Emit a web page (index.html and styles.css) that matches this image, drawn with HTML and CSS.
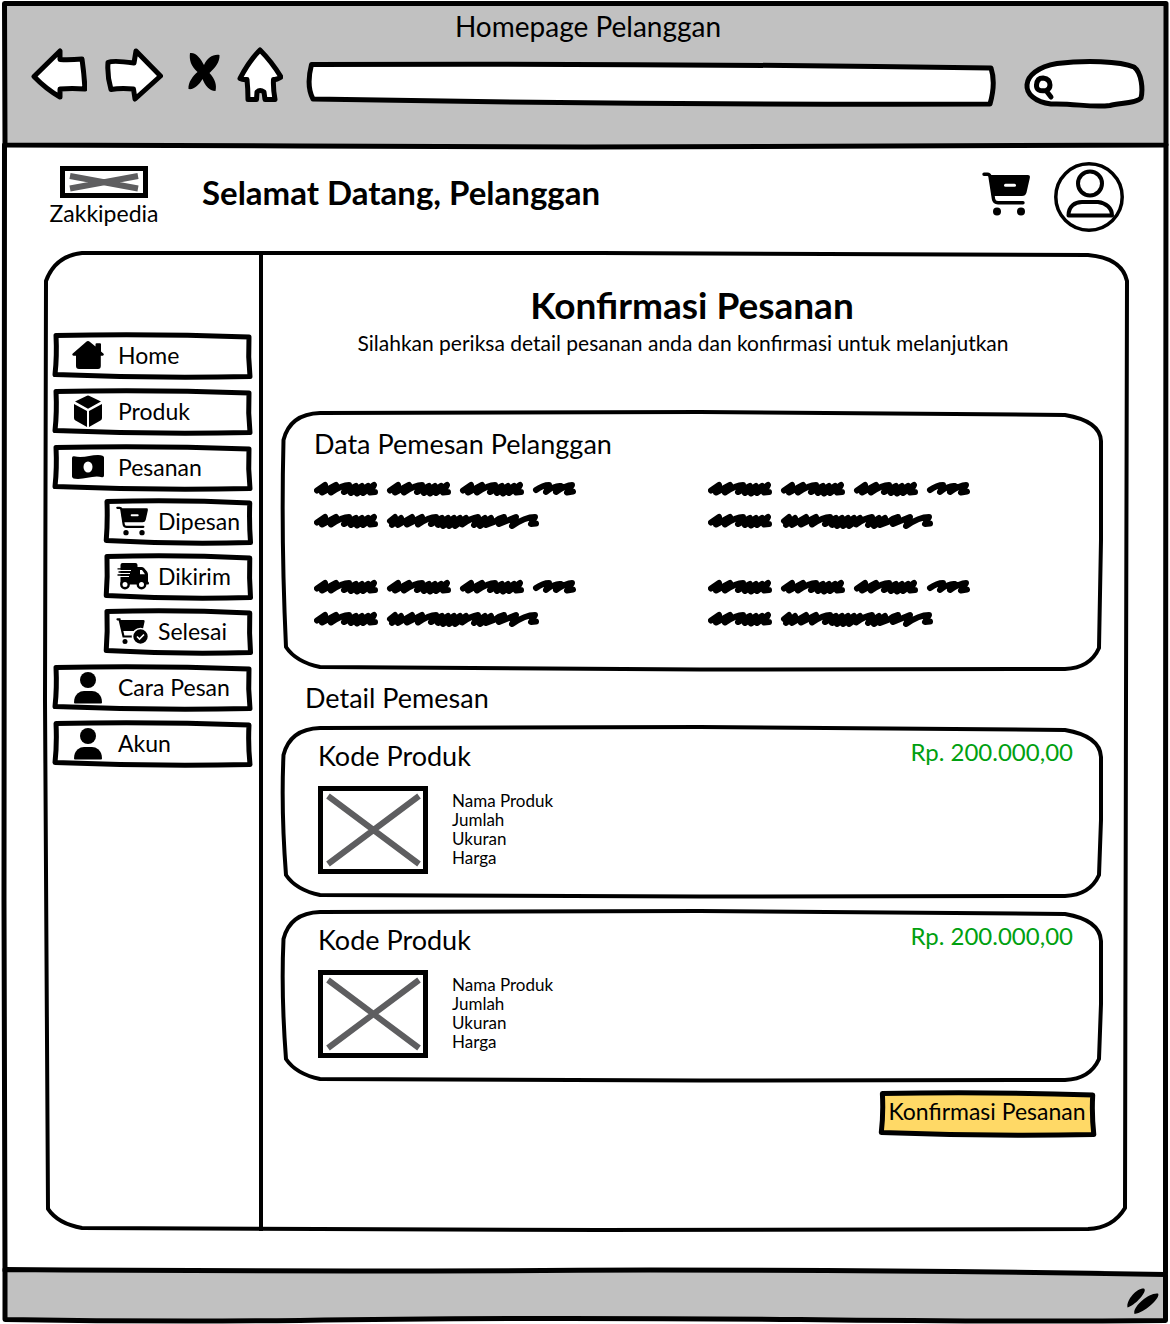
FILE: index.html
```html
<!DOCTYPE html>
<html lang="id">
<head>
<meta charset="utf-8">
<meta name="viewport" content="width=device-width, initial-scale=1">
<title>Homepage Pelanggan</title>
<link rel="stylesheet" href="styles.css">
</head>
<body>
<svg class="defs" aria-hidden="true">
  <symbol id="frame-item" viewBox="0 0 199 48" preserveAspectRatio="none">
    <path d="M4 3.500Q100 1.500 196 5Q195 25 197 44.500Q100 46.500 3 42.500Q5 24 4 3.500Z" vector-effect="non-scaling-stroke"/>
  </symbol>
  <symbol id="frame-card" viewBox="281 725 822 173" preserveAspectRatio="none">
    <path d="M320 728L700 727L1065 730Q1100 736 1101 757V820L1099 875Q1090 895 1065 896L700 896.5L320 895Q296 890 286 875Q281 810 283.5 755Q290 729 320 728Z" vector-effect="non-scaling-stroke"/>
  </symbol>
  <symbol id="icon-cart" viewBox="982 170 48 48">
    <path d="M984 174.2H987.5Q989.5 174.2 990 176.500L993.500 199Q994 202.700 998 202.700H1023" fill="none" stroke="#000" stroke-width="3.4" stroke-linecap="round"/>
    <path d="M989 175H1028Q1030.500 175 1029.800 178L1026.500 192.500Q1025.500 196 1022 196H992Z"/>
    <path d="M1005.500 185.300H1014.500" stroke="#fff" stroke-width="3" stroke-linecap="round"/>
    <circle cx="997" cy="211.500" r="4"/><circle cx="1021" cy="211.500" r="4"/>
  </symbol>
  <symbol id="icon-person" viewBox="72 671 32 32">
    <circle cx="88" cy="680" r="8"/>
    <path d="M74 702.500C74 694 80 691 84 691H92C96 691 102 694 102 702.500Q102 703.500 101 703.500H75Q74 703.500 74 702.500Z"/>
  </symbol>
  <symbol id="word" viewBox="0 0 64 16">
    <path d="M3 9.500L11 4L8 11.500L22 4L17 11.500Q28 4 35 4L30 11Q36 8 42 5L37 12L48 5L43 12.500L54 5L49 12L60 4L56 11.500L61 11"/>
  </symbol>
  <symbol id="word-short" viewBox="0 0 43 16">
    <path d="M3 9Q10 4 16 4L13 11Q22 4 28 5L23 11Q33 4 39 4L34 11.500L40 10.500"/>
  </symbol>
  <symbol id="word-long" viewBox="0 0 152 16">
    <path d="M3 8L8 4L5 12L14 5L11 12L25 4L20 11.500L35 4L31 11.500Q42 4 49 4L44 11L55 5L51 12L61 5L56 13L67 5L62 13L73 5L68 13L79 5L75 11.500Q84 5 91 4L87 12L98 5L93 13L104 5L99 12L107 9Q112 5 117 4L112 11L129 4L125 13Q138 4 148 4L144 11L149 10.500"/>
  </symbol>
  <symbol id="note" viewBox="0 0 262 48">
    <use href="#word" width="64" height="16"/>
    <use href="#word" x="73" width="64" height="16"/>
    <use href="#word" x="146" width="64" height="16"/>
    <use href="#word-short" x="219" width="43" height="16"/>
    <use href="#word" y="32" width="64" height="16"/>
    <use href="#word-long" x="73" y="32" width="152" height="16"/>
  </symbol>
</svg>

<div class="window">
  <header class="chrome">
    <svg class="frame frame-heavy" viewBox="0 0 1170 148" preserveAspectRatio="none" aria-hidden="true">
      <path d="M4.500 3.500H1166V145L585 147L300 146L5 145Z" fill="#c1c1c1" vector-effect="non-scaling-stroke"/>
    </svg>
    <div class="window-title">Homepage Pelanggan</div>
    <div class="toolbar">
      <button class="tool" type="button" aria-label="Kembali">
        <svg width="56" height="60" viewBox="31 45 56 60"><path class="ink" d="M34 75.500L60 50V58.500Q70 59 82 58Q84 72 85 88Q72 87 60 88V96Q46 88 34 75.500Z"/></svg>
      </button>
      <button class="tool" type="button" aria-label="Maju">
        <svg width="58" height="60" viewBox="105 45 58 60"><path class="ink" d="M108 61.500Q113 59 134 62L136 50L160.500 75L135 98L133.500 88Q120 87 111 88.500Q107 75 108 61.500Z"/></svg>
      </button>
      <button class="tool" type="button" aria-label="Hentikan">
        <svg width="32" height="60" viewBox="188 45 32 60"><path d="M190 52C196 51 201 58 204 64C207 57 213 53 219.500 54C220 61 215 67 209.500 72C215 78 217 84 215.500 90C209 90 205 84 202.500 78C199 84 194 89 188.500 88C188 81 193 75 197.500 71C191 65 189 59 190 52Z"/></svg>
      </button>
      <button class="tool" type="button" aria-label="Beranda">
        <svg width="46" height="60" viewBox="237 45 46 60"><path class="ink" d="M260 49Q272 61 281 76Q276 79 273.500 78.500Q273 88 275 98.500H265L264 91Q260 88 257 91L256.500 98.500H248Q248 88 247 78.500Q243 79 240 77.500Q249 60 260 49Z"/></svg>
      </button>
      <label class="field address">
        <svg class="frame frame-heavy" viewBox="306 60 690 46" preserveAspectRatio="none" aria-hidden="true"><path d="M311.500 63.500Q650 62 991 67Q996 82 990 103Q650 104 313 98Q306 85 311.500 63.500Z" fill="#fff" vector-effect="non-scaling-stroke"/></svg>
        <input type="url" aria-label="Alamat">
      </label>
      <label class="field search">
        <svg class="frame frame-heavy" viewBox="1025 56 120 52" preserveAspectRatio="none" aria-hidden="true"><path d="M1051 102C1018 98 1018 68 1057 61.500C1085 58 1120 59 1134 65C1142 71 1143 88 1141 96C1137 101 1120 101 1110 103.500C1090 106 1075 101 1051 102Z" fill="#fff" vector-effect="non-scaling-stroke"/><path d="M1046 88.500Q1036 90 1036.500 83Q1037 76 1043 76Q1050 77 1050 83Q1050 87 1046 88.500L1051 95" fill="none"/></svg>
        <input type="search" aria-label="Cari">
      </label>
    </div>
  </header>

  <div class="page">
    <svg class="frame frame-heavy" viewBox="0 148 1170 1120" preserveAspectRatio="none" aria-hidden="true">
      <path d="M4.500 145L4 900L5 1270M1166 145L1165.500 900V1272" fill="none" vector-effect="non-scaling-stroke"/>
    </svg>
    <header class="site-header">
      <a class="brand" href="#">
        <svg class="picture logo" width="88" height="32" viewBox="0 0 78 22" aria-hidden="true"><path d="M5 5L73 17.500M73 5L5 17.500"/></svg>
        <span>Zakkipedia</span>
      </a>
      <h1>Selamat Datang, Pelanggan</h1>
      <a class="cart" href="#" aria-label="Keranjang"><svg width="48" height="48"><use href="#icon-cart"/></svg></a>
      <a href="#" aria-label="Profil">
        <svg width="70" height="70" viewBox="1054 162 70 70" fill="none" stroke="#000" stroke-width="4">
          <circle cx="1089" cy="197" r="33.200" stroke-width="3.500"/><circle cx="1090" cy="183.500" r="12"/>
          <path d="M1068.500 215.500C1068.500 206 1075 202 1082 202H1098C1106 203 1112 208 1112 215.500Z" stroke-linejoin="round"/>
        </svg>
      </a>
    </header>

    <div class="panel">
      <svg class="frame" viewBox="43 251 1086 979" preserveAspectRatio="none" aria-hidden="true">
        <path d="M82 253H600L1088 255Q1122 258 1127 281L1126 700L1125 1207Q1113 1227 1088 1228L600 1229L82 1227Q58 1223 48 1208L45 700L46 281Q55 256 82 253Z" vector-effect="non-scaling-stroke"/>
      </svg>
      <nav class="sidebar" aria-label="Menu">
        <ul class="menu">
          <li><a class="item" href="#"><svg class="frame frame-heavy"><use href="#frame-item"/></svg>
            <svg class="icon" viewBox="72 340 32 32"><path d="M88 342Q89 342 90 343L95.500 347.500V345.500Q95.500 344.300 96.700 344.300H100Q101 344.300 101 345.500V352.500L103.600 354.800Q104.600 356.500 102.600 356.800H100.800V367Q100.800 370 98 370H79Q76 370 76 367V356.800H73.500Q71.500 356.300 72.500 354.800L86 343Q87 342 88 342Z"/></svg>Home</a></li>
          <li><a class="item" href="#"><svg class="frame frame-heavy"><use href="#frame-item"/></svg>
            <svg class="icon" viewBox="72 396 32 32"><path d="M87 396.800Q88 396.300 89 396.800L101 402.500L88 409.700L75 402.500ZM74 405L87 412V428L75.500 421.500Q74 420.500 74 419ZM102 405L89 412V428L100.500 421.500Q102 420.500 102 419Z"/></svg>Produk</a></li>
          <li><a class="item" href="#"><svg class="frame frame-heavy"><use href="#frame-item"/></svg>
            <svg class="icon" viewBox="72 452 32 32"><path d="M72 459Q72 457 74 457.300C83 459.500 90 456 98 456Q104 456 104 458.500V476.500Q104 478.500 102 478.200C94 476 86 480 78 480Q72 480 72 477.500Z"/><ellipse cx="88" cy="468" rx="4.500" ry="5.500" fill="#fff"/></svg>Pesanan</a>
            <ul class="submenu">
              <li><a class="item item-sub" href="#"><svg class="frame frame-heavy"><use href="#frame-item"/></svg>
                <svg class="icon"><use href="#icon-cart"/></svg>Dipesan</a></li>
              <li><a class="item item-sub" href="#"><svg class="frame frame-heavy"><use href="#frame-item"/></svg>
                <svg class="icon" viewBox="117 560 32 32"><path d="M123.500 563H136.500Q138.500 563 138.500 565V567H142.500Q144 567 145 568L148 571.500Q149 573 149 574.500V581.500Q150 582 150 583.300Q150 584.500 149 584.500H121.500V565Q121.500 563 123.500 563Z"/><path d="M141 570H143L146 574.300H141Z" fill="#fff"/><path d="M121 570.500H132M119 573.500H131M121 576.500H130" stroke="#fff" stroke-width="1.200"/><path d="M118.500 568.800H132M119.500 572H132M118.500 575H131" stroke="#000" stroke-width="1.300"/><circle cx="126" cy="584.500" r="3.700" fill="#fff" stroke="#000" stroke-width="2.400"/><circle cx="142.500" cy="584.500" r="3.700" fill="#fff" stroke="#000" stroke-width="2.400"/></svg>Dikirim</a></li>
              <li><a class="item item-sub" href="#"><svg class="frame frame-heavy"><use href="#frame-item"/></svg>
                <svg class="icon" viewBox="116 616 32 32"><path d="M117.500 620.300H119.500L123.500 637.500H133" fill="none" stroke="#000" stroke-width="2.200" stroke-linecap="round"/><path d="M120 621H143.500Q145 621 144.600 622.500L142.500 632H122.500Z"/><circle cx="125" cy="642.500" r="2.500"/><circle cx="140.500" cy="637.500" r="8" stroke="#fff" stroke-width="1.600"/><path d="M137 637.500L139.500 640L144 635.500" fill="none" stroke="#fff" stroke-width="1.600"/></svg>Selesai</a></li>
            </ul>
          </li>
          <li><a class="item" href="#"><svg class="frame frame-heavy"><use href="#frame-item"/></svg>
            <svg class="icon"><use href="#icon-person"/></svg>Cara Pesan</a></li>
          <li><a class="item" href="#"><svg class="frame frame-heavy"><use href="#frame-item"/></svg>
            <svg class="icon"><use href="#icon-person"/></svg>Akun</a></li>
        </ul>
      </nav>

      <main class="content">
        <h2 class="heading">Konfirmasi Pesanan</h2>
        <p class="lead">Silahkan periksa detail pesanan anda dan konfirmasi untuk melanjutkan</p>

        <section class="card customer">
          <svg class="frame" viewBox="281 411 822 260" preserveAspectRatio="none" aria-hidden="true">
            <path d="M320 413L700 412L1065 415Q1100 421 1101 441V540L1099 648Q1090 668 1065 669L700 669.500L320 667Q296 662 286 647Q281 540 283.500 440Q290 414 320 413Z" vector-effect="non-scaling-stroke"/>
          </svg>
          <h3>Data Pemesan Pelanggan</h3>
          <div class="notes" aria-hidden="true">
            <svg class="note"><use href="#note"/></svg>
            <svg class="note"><use href="#note"/></svg>
            <svg class="note"><use href="#note"/></svg>
            <svg class="note"><use href="#note"/></svg>
          </div>
        </section>

        <h3 class="section-title">Detail Pemesan</h3>
        <div class="products">
          <article class="card product">
            <svg class="frame" aria-hidden="true"><use href="#frame-card"/></svg>
            <div class="product-head"><h3>Kode Produk</h3><span class="price">Rp. 200.000,00</span></div>
            <div class="product-body">
              <svg class="picture" width="110" height="88" viewBox="5 5 100 78" aria-hidden="true"><path d="M10 10L101 78M101 10L10 78"/></svg>
              <ul class="facts"><li>Nama Produk</li><li>Jumlah</li><li>Ukuran</li><li>Harga</li></ul>
            </div>
          </article>
          <article class="card product">
            <svg class="frame" aria-hidden="true"><use href="#frame-card"/></svg>
            <div class="product-head"><h3>Kode Produk</h3><span class="price">Rp. 200.000,00</span></div>
            <div class="product-body">
              <svg class="picture" width="110" height="88" viewBox="5 5 100 78" aria-hidden="true"><path d="M10 10L101 78M101 10L10 78"/></svg>
              <ul class="facts"><li>Nama Produk</li><li>Jumlah</li><li>Ukuran</li><li>Harga</li></ul>
            </div>
          </article>
        </div>
        <button class="confirm" type="button"><svg class="frame frame-heavy" aria-hidden="true"><use href="#frame-item"/></svg><span>Konfirmasi Pesanan</span></button>
      </main>
    </div>
  </div>

  <footer class="statusbar">
    <svg class="frame frame-heavy" viewBox="0 1268 1170 56" preserveAspectRatio="none" aria-hidden="true">
      <path d="M5 1268.500Q300 1271 650 1269Q900 1269 1165.500 1273.500V1319.500Q1000 1321 800 1318.500Q500 1316 300 1319.500Q150 1321 5 1318.500Z" fill="#c1c1c1" vector-effect="non-scaling-stroke"/>
    </svg>
    <svg class="grip" width="32" height="28" viewBox="1127 1285 32 28" aria-hidden="true"><path d="M1127.500 1305.500C1126 1299 1136 1286 1144 1286.500C1148 1289 1136 1303 1127.500 1305.500ZM1134.500 1312C1132 1305 1149 1290 1158 1291.500C1161 1295 1146 1310 1134.500 1312Z"/></svg>
  </footer>
</div>
</body>
</html>
```

FILE: styles.css
```css
* { box-sizing: border-box; }

body {
  margin: 0;
  background: #fff;
  color: #000;
  font-family: Lato, "Open Sans", sans-serif;
  font-size: 23px;
  line-height: 28px;
}

h1, h2, h3, p, ul { margin: 0; padding: 0; }
h3 { font-size: 27px; font-weight: 400; line-height: 30px; }
ul { list-style: none; }
a { color: inherit; text-decoration: none; }
svg { display: block; flex: none; }
symbol { overflow: visible; }
button, input { font: inherit; color: inherit; background: none; border: 0; padding: 0; }
button { cursor: pointer; }

.defs { position: absolute; width: 0; height: 0; }

/* Hand-drawn outline stretched behind its parent */
.frame {
  position: absolute;
  inset: 0;
  z-index: -1;
  width: 100%;
  height: 100%;
  overflow: visible;
  fill: none;
  stroke: #000;
  stroke-width: 4;
  stroke-linejoin: round;
  stroke-linecap: round;
}
.frame-heavy { stroke-width: 5; }

.chrome, .page, .panel, .card, .item, .field, .confirm, .statusbar {
  position: relative;
  z-index: 0;
}

.window { display: flex; flex-direction: column; min-height: 100vh; }

/* Browser bar */
.chrome { padding: 10px 25px 44px 31px; }
.window-title { font-size: 28px; line-height: 32px; text-align: center; }
.toolbar {
  display: grid;
  grid-template-columns: 74px 83px 49px 69px minmax(0, 1fr) 120px;
  align-items: center;
  height: 62px;
}
.tool { justify-self: start; }
.ink { fill: #fff; stroke: #000; stroke-width: 5; stroke-linejoin: round; }
.field { display: block; }
.field input { display: block; width: 100%; height: 100%; padding: 0 16px; outline: 0; }
.address { height: 46px; margin: 16px 29px 0 0; }
.search { height: 52px; margin-top: 16px; }
.search input { padding-left: 32px; }

/* Page */
.page { flex: 1; display: flex; flex-direction: column; padding: 14px 41px 38px 43px; }
.site-header { display: flex; align-items: center; gap: 24px; height: 70px; padding-right: 5px; }
.brand { display: flex; flex-direction: column; align-items: center; width: 122px; }
.brand span { line-height: 30px; }
.cart { padding-bottom: 6px; }
.picture { border: 5px solid #000; fill: none; stroke: #5e5e60; stroke-width: 6; }
h1 { flex: 1; margin-left: 13px; padding-bottom: 10px; font-size: 33px; line-height: 40px; }

.panel { flex: 1; display: grid; grid-template-columns: 220px minmax(0, 1fr); margin-top: 19px; }
.sidebar { padding: 81px 7px 32px 9px; border-right: 4px solid #000; }
.menu { display: grid; gap: 8px; }
.submenu { display: grid; gap: 7px; margin: 6px 0 0 52px; }
.item { display: flex; align-items: center; gap: 14px; height: 48px; padding: 0 0 2px 20px; white-space: nowrap; }
.item-sub { gap: 10px; padding-left: 12px; }
.icon { width: 32px; height: 32px; overflow: visible; }

.content { display: flex; flex-direction: column; padding: 30px 26px 93px 18px; }
.heading { font-size: 37px; line-height: 48px; text-align: center; }
.lead { padding-right: 18px; font-size: 21px; text-align: center; }

.customer { margin-top: 54px; padding: 18px 0 44px 33px; }
.notes { display: grid; grid-template-columns: repeat(2, minmax(0, 394px)); gap: 50px 0; margin-top: 22px; }
.note { width: 262px; height: 48px; fill: none; stroke: #000; stroke-width: 6; stroke-linecap: round; stroke-linejoin: round; }

.section-title { margin: 12px 0 12px 24px; }
.products { display: grid; gap: 11px; }
.product { padding: 12px 30px 24px 37px; }
.product-head { display: flex; justify-content: space-between; padding-bottom: 11px; }
.product-head h3 { line-height: 38px; }
.price { color: #00a010; font-size: 24px; line-height: 30px; }
.product-body { display: flex; align-items: center; gap: 24px; }
.facts { padding-bottom: 2px; font-size: 17px; line-height: 19px; }

.confirm { align-self: flex-end; margin: 8px 7px 0 0; width: 218px; height: 48px; padding-bottom: 6px; }
.confirm .frame { fill: #ffd966; }

/* Status bar */
.statusbar { display: flex; justify-content: flex-end; padding: 18px 11px 10px; }
```
